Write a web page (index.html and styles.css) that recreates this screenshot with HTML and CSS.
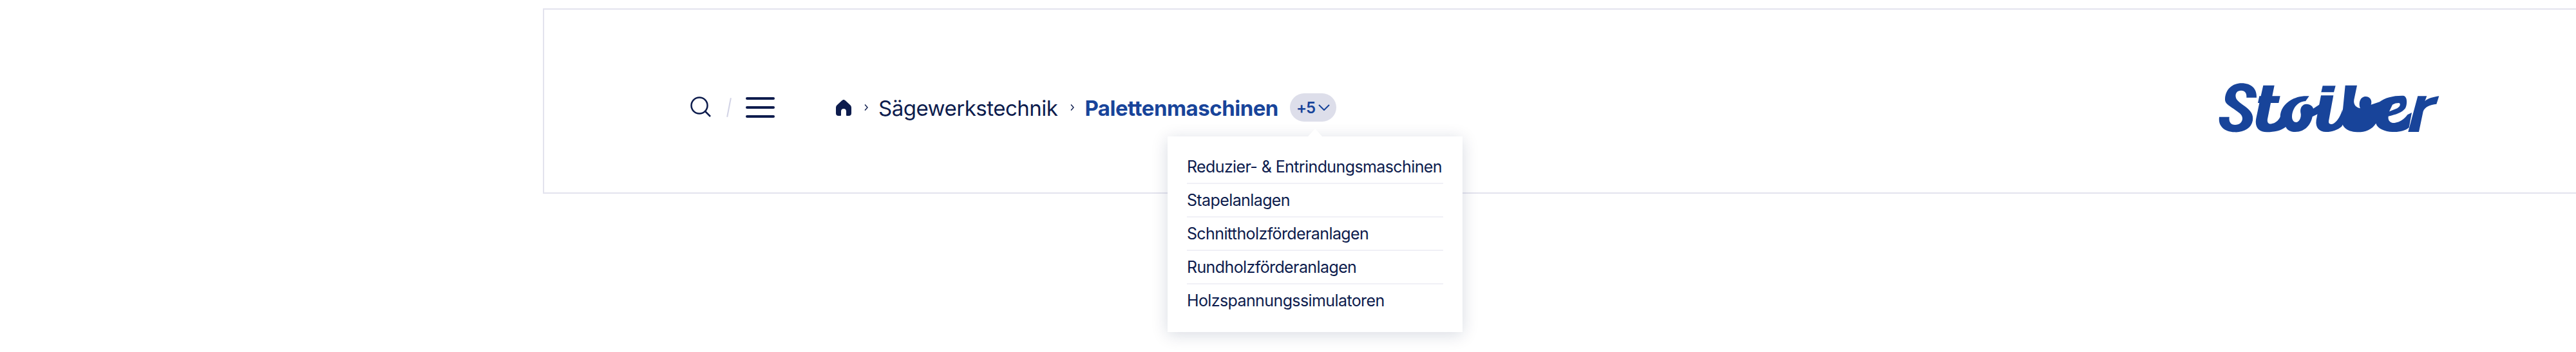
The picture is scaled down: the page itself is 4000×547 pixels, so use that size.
FILE: index.html
```html
<!DOCTYPE html>
<html lang="de">

<head>
    <meta charset="UTF-8">
    <title>Stoiber</title>
    <link rel="stylesheet" href="styles.css">
</head>

<body>

    <header class="header">
        <div class="tools">
            <svg class="searchIcon" width="34" height="34" viewBox="0 0 34 34">
                <circle cx="14" cy="14" r="12.5" />
                <path d="M23 23 L31 31" />
            </svg>
            <span class="slash"></span>
            <div class="burger">
                <span></span>
                <span></span>
                <span></span>
            </div>
        </div>

        <nav class="crumbs">
            <svg class="homeIcon" width="24" height="25" viewBox="0 0 24 25">
                <path d="M12 0 C13 0 14 .6 15 1.5 L22 8 C23.4 9.4 24 10.6 24 12.5 V21 C24 23.5 22.5 25 20 25 H17.500 C16.500 25 16 24.500 16 23.500 V18 C16 15.500 14.500 14 12 14 C9.500 14 8 15.500 8 18 V23.500 C8 24.500 7.500 25 6.500 25 H4 C1.500 25 0 23.500 0 21 V12.500 C0 10.600 .6 9.400 2 8 L9 1.500 C10 .6 11 0 12 0 Z" />
            </svg>
            <svg class="sep" width="6" height="10" viewBox="0 0 6 10">
                <path d="M1 .5 L5 5 L1 9.500" />
            </svg>
            <a class="crumb">Sägewerkstechnik</a>
            <svg class="sep" width="6" height="10" viewBox="0 0 6 10">
                <path d="M1 .5 L5 5 L1 9.500" />
            </svg>
            <a class="crumb current">Palettenmaschinen</a>

            <div class="more">
                <span>+5</span>
                <svg width="18" height="10" viewBox="0 0 18 10">
                    <path d="M1 1 L9 9 L17 1" />
                </svg>

                <ul class="dropdown">
                    <li>Reduzier- &amp; Entrindungsmaschinen</li>
                    <li>Stapelanlagen</li>
                    <li>Schnittholzförderanlagen</li>
                    <li>Rundholzförderanlagen</li>
                    <li>Holzspannungssimulatoren</li>
                </ul>
            </div>
        </nav>

        <svg class="logo" width="390" height="110" viewBox="0 0 1170 330" role="img" aria-label="Stoiber">
            <g class="logoBlue">
                <path d="M105 130 C108 85 140 58 182 58 C228 58 254 84 252 125 H205 C207 105 198 92 180 92 C162 92 152 104 155 122 C158 140 178 150 198 166 C225 186 238 204 234 232 C228 268 192 288 150 286 C102 284 72 258 78 215 H125 C122 238 132 252 152 252 C172 252 186 240 186 222 C186 204 168 194 146 178 C120 160 103 152 105 130 Z" />
                <path d="M283 68 H335 L325 118 H362 L355 150 H318 L303 225 C300 242 310 250 322 247 C338 243 352 235 362 215 C362 160 420 112 497 118 L480 142 C448 142 420 170 417 212 C416 235 432 245 444 238 C455 230 460 215 458 200 C452 178 462 155 485 155 C503 155 515 168 516 176 L562 146 L552 194 L512 214 C505 250 480 285 432 285 C410 285 395 278 388 262 C365 280 335 286 300 286 C262 286 242 262 250 222 L265 150 H258 L265 118 H272 Z" />
                <path d="M560 70 H620 L612 100 H553 Z" />
                <path d="M552 115 H610 L588 235 C586 250 600 252 612 245 C630 235 645 205 652 180 L660 240 L648 260 C630 275 605 285 575 285 C545 285 525 265 530 230 Z" />
                <path d="M665 68 H720 L706 135 C702 160 718 172 735 175 C725 150 735 120 760 120 C780 120 792 138 785 158 L825 145 C850 125 890 115 935 116 C955 118 955 155 945 175 C930 195 900 205 866 212 C862 235 880 245 895 243 C920 240 940 225 955 205 L975 195 L962 265 C945 280 915 287 885 285 C850 283 815 270 808 245 C790 275 755 287 720 286 C670 284 645 260 650 220 Z" />
                <path d="M1003 118 H1045 L1036 142 C1050 128 1075 122 1102 118 L1090 155 C1060 158 1035 168 1028 190 L1008 285 H958 Z" />
            </g>
            <path class="logoCounter" d="M870 190 L885 158 C895 152 905 150 915 150 C925 152 922 170 900 178 Z" />
        </svg>
    </header>

</body>

</html>
```

FILE: styles.css
```css
* {
    margin: 0;
    padding: 0;
    box-sizing: border-box;
}

html,
body {
    width: 100%;
    height: 100%;
    background-color: #fff;
    font-family: Inter, "Noto Sans", sans-serif;
    color: #0d1c4d;
    overflow: hidden;
}

.header {
    display: flex;
    align-items: center;
    justify-content: space-between;
    height: 288px;
    margin-top: 13px;
    margin-left: 843px;
    padding: 20px 190px 0 227px;
    border: 2px solid #e3e3ee;
    border-right: 0;
}

.tools {
    display: flex;
    align-items: center;
    gap: 25px;
}

.searchIcon circle,
.searchIcon path {
    fill: none;
    stroke: #0d1c4d;
    stroke-width: 2.5;
}

.slash {
    width: 2px;
    height: 30px;
    background-color: #d2d3e5;
    transform: rotate(11deg);
}

.burger {
    display: flex;
    flex-direction: column;
    gap: 10px;
    width: 45px;
}

.burger span {
    height: 4px;
    border-radius: 2px;
    background-color: #0d1c4d;
}

.crumbs {
    display: flex;
    align-items: center;
    flex: 1;
    margin-left: 95px;
}

.homeIcon {
    fill: #0d1c4d;
}

.sep {
    margin: 0 16px 0 20px;
}

.sep path {
    fill: none;
    stroke: #0d1c4d;
    stroke-width: 1.4;
}

.crumb {
    padding-top: 2px;
    font-size: 33px;
    line-height: 44px;
    letter-spacing: -0.5px;
    white-space: nowrap;
}

.current {
    font-weight: 700;
    color: #18449a;
}

.more {
    position: relative;
    display: flex;
    align-items: center;
    gap: 5px;
    width: 72px;
    height: 44px;
    margin-left: 18px;
    padding: 0 10px;
    border-radius: 22px;
    background-color: #dddeea;
    color: #18449a;
    font-size: 24px;
    font-weight: 600;
    letter-spacing: -1px;
}

.more svg {
    flex: none;
}

.more svg path {
    fill: none;
    stroke: #18449a;
    stroke-width: 2;
}

.dropdown {
    position: absolute;
    top: 67px;
    left: -190px;
    width: 458px;
    padding: 22px 30px;
    list-style: none;
    background-color: #fff;
    box-shadow: 0 4px 24px rgba(13, 28, 77, 0.16);
    color: #0d1c4d;
    font-size: 25px;
    font-weight: 400;
    letter-spacing: -0.6px;
}

.dropdown::before {
    content: "";
    position: absolute;
    top: -12px;
    left: 218px;
    width: 0;
    height: 0;
    border-left: 11px solid transparent;
    border-right: 11px solid transparent;
    border-bottom: 12px solid #fff;
}

.dropdown li {
    height: 52px;
    line-height: 50px;
    border-bottom: 2px solid #f0f0f6;
    white-space: nowrap;
}

.dropdown li:last-child {
    border-bottom: 0;
}

.logo {
    margin-bottom: 4px;
}

.logoBlue {
    fill: #18449a;
}

.logoCounter {
    fill: #fff;
}
```
